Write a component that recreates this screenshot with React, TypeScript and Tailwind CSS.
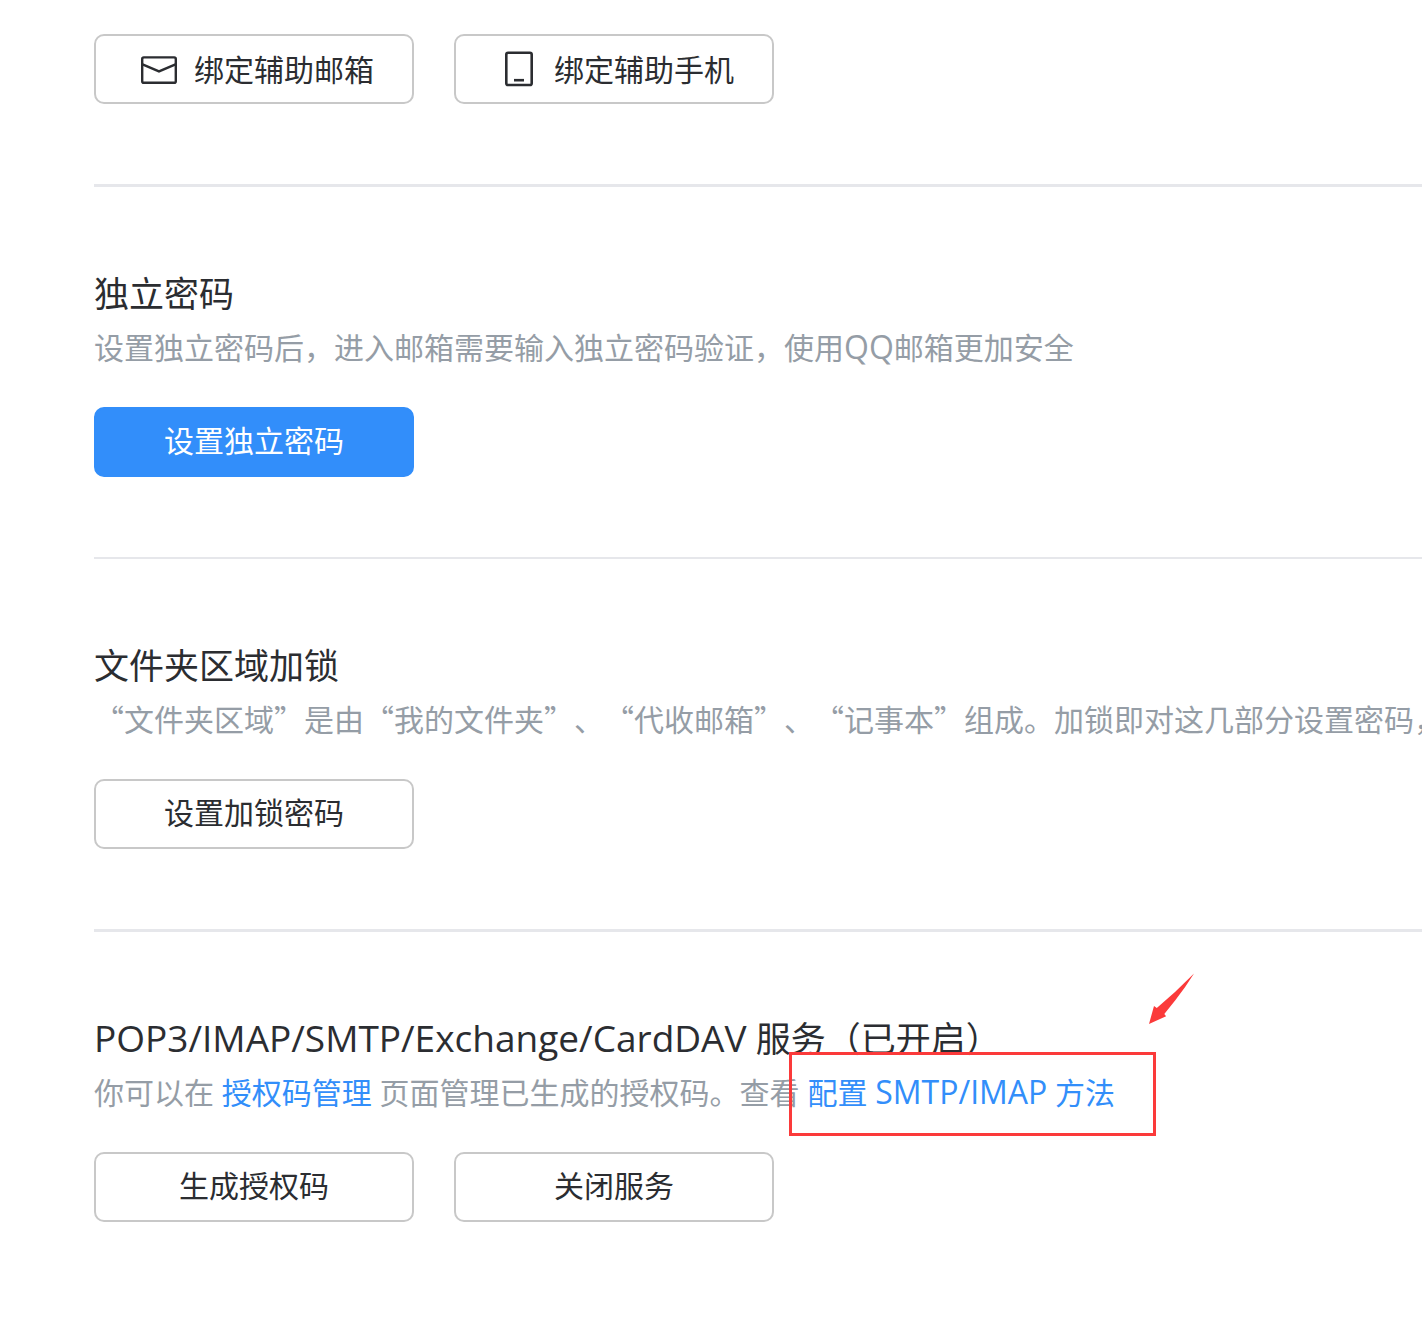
import React from "react";
import { clsx } from "clsx";

interface ActionButtonProps {
  icon?: React.ReactNode;
  primary?: boolean;
  children: React.ReactNode;
}

interface SectionProps {
  title: React.ReactNode;
  description: React.ReactNode;
  className?: string;
  children: React.ReactNode;
}

const MailIcon = () => (
  <svg width="50" height="50" viewBox="0 0 50 50" fill="none" stroke="currentColor" strokeWidth="2.4" aria-hidden="true">
    <rect x="8.2" y="13.4" width="33.6" height="25.4" rx="1.6" />
    <path d="M8.5 20.4 25 27.4 41.5 20.4" />
  </svg>
);

const PhoneIcon = () => (
  <svg width="50" height="50" viewBox="0 0 50 50" fill="none" stroke="currentColor" strokeWidth="2.6" aria-hidden="true">
    <rect x="12.3" y="8.8" width="25.4" height="32.2" rx="1.8" />
    <path d="M20 36.2h10" />
  </svg>
);

const ActionButton: React.FC<ActionButtonProps> = ({ icon, primary, children }) => (
  <button
    type="button"
    className={clsx(
      "flex h-[70px] w-80 items-center justify-center gap-[10px] rounded-[10px] border-2",
      !icon && "pb-1",
      primary
        ? "border-[#328efa] bg-[#328efa] text-white"
        : "border-[#c8c8c8] bg-white text-[#2b2d31]"
    )}
  >
    {icon}
    <span>{children}</span>
  </button>
);

const Section: React.FC<SectionProps> = ({ title, description, className, children }) => (
  <section className={clsx("border-[#e6e7eb] pt-[79px] pb-20", className)}>
    <h2 className="text-[35px] leading-[56px] text-[#2b2d31]">{title}</h2>
    <p className="leading-[52px] text-[#959da6]">{description}</p>
    <div className="mt-[33px] flex gap-10">{children}</div>
  </section>
);

export default function App() {
  return (
    <main
      lang="zh-CN"
      className="min-h-screen overflow-hidden bg-white pt-[34px] pl-[94px] font-['Open_Sans','Noto_Sans_CJK_SC',sans-serif] text-[30px] whitespace-nowrap [text-spacing-trim:space-all]"
    >
      <div className="flex gap-10 pb-20">
        <ActionButton icon={<MailIcon />}>绑定辅助邮箱</ActionButton>
        <ActionButton icon={<PhoneIcon />}>绑定辅助手机</ActionButton>
      </div>

      <Section
        title="独立密码"
        description={
          <>
            设置独立密码后，进入邮箱需要输入独立密码验证，使用
            <span className="text-[32px] leading-none">QQ</span>邮箱更加安全
          </>
        }
        className="border-t-3"
      >
        <ActionButton primary>设置独立密码</ActionButton>
      </Section>

      <Section
        title="文件夹区域加锁"
        description={
          <span className="font-['Noto_Sans_CJK_SC',sans-serif] leading-none">
            “文件夹区域”是由“我的文件夹”、“代收邮箱”、“记事本”组成。加锁即对这几部分设置密码，
          </span>
        }
        className="border-t-2"
      >
        <ActionButton>设置加锁密码</ActionButton>
      </Section>

      <Section
        title={
          <>
            <span className="text-[37px] leading-none">POP3/IMAP/SMTP/Exchange/CardDAV</span>{" "}
            服务（已开启）
          </>
        }
        description={
          <>
            你可以在{" "}
            <a href="#auth-codes" className="text-[#328efa]">
              授权码管理
            </a>{" "}
            页面管理已生成的授权码。查看{" "}
            <a href="#smtp-imap" className="relative inline-block text-[#328efa]">
              配置 <span className="text-[32px] leading-none">SMTP/IMAP</span> 方法
              {/* Callout frame and arrow around the setup link */}
              <span className="pointer-events-none absolute -top-[15px] -right-[41px] -bottom-[17px] -left-[18px] border-3 border-[#fb3a3a]">
                <svg
                  className="absolute -top-[82px] -right-[42px] fill-[#fb3a3a]"
                  width="46"
                  height="52"
                  viewBox="0 0 46 52"
                  aria-hidden="true"
                >
                  <path d="M45 .5Q36 15 26.5 27L15.3 41l1.8 2.3L0 51l5-18 2.8 2L26 19z" />
                </svg>
              </span>
            </a>
          </>
        }
        className="border-t-3"
      >
        <ActionButton>生成授权码</ActionButton>
        <ActionButton>关闭服务</ActionButton>
      </Section>
    </main>
  );
}
